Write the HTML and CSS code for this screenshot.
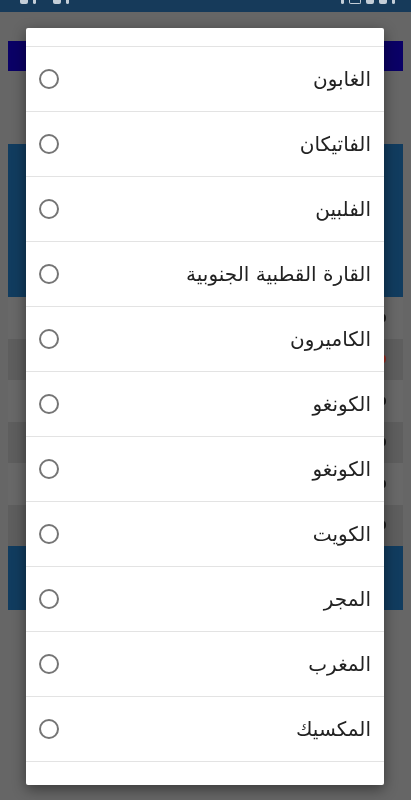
FILE: index.html
```html
<!DOCTYPE html>
<html lang="ar">
<head>
  <meta charset="UTF-8" />
  <meta name="viewport" content="width=device-width, initial-scale=1" />
  <title>اختر الدولة</title>
  <link rel="stylesheet" href="styles.css">
</head>
<body>

  <div class="statusbar">
    <div class="sb-group">
      <span class="sb-icon"></span>
      <span class="sb-icon thin"></span>
      <span class="sb-icon gap"></span>
      <span class="sb-icon thin"></span>
    </div>
    <div class="sb-group">
      <span class="sb-icon thin"></span>
      <span class="sb-icon round"></span>
      <span class="sb-icon"></span>
      <span class="sb-icon"></span>
      <span class="sb-icon thin"></span>
    </div>
  </div>

  <!-- page behind the dialog (already dimmed) -->
  <div class="page">
    <div class="topbar"></div>
    <div class="hero"></div>
    <div class="rows">
      <div class="row light"><span class="mark"></span></div>
      <div class="row dark"><span class="mark red"></span></div>
      <div class="row light"><span class="mark"></span></div>
      <div class="row dark"><span class="mark"></span></div>
      <div class="row light"><span class="mark"></span></div>
      <div class="row dark"><span class="mark"></span></div>
    </div>
    <div class="hero small"></div>
  </div>

  <div class="dialog">
    <ul class="choices" dir="rtl">
      <li class="choice"><span class="label">الغابون</span><span class="radio"></span></li>
      <li class="choice"><span class="label">الفاتيكان</span><span class="radio"></span></li>
      <li class="choice"><span class="label">الفلبين</span><span class="radio"></span></li>
      <li class="choice"><span class="label">القارة القطبية الجنوبية</span><span class="radio"></span></li>
      <li class="choice"><span class="label">الكاميرون</span><span class="radio"></span></li>
      <li class="choice"><span class="label">الكونغو</span><span class="radio"></span></li>
      <li class="choice"><span class="label">الكونغو</span><span class="radio"></span></li>
      <li class="choice"><span class="label">الكويت</span><span class="radio"></span></li>
      <li class="choice"><span class="label">المجر</span><span class="radio"></span></li>
      <li class="choice"><span class="label">المغرب</span><span class="radio"></span></li>
      <li class="choice"><span class="label">المكسيك</span><span class="radio"></span></li>
      <li class="choice"></li>
    </ul>
  </div>

</body>
</html>
```

FILE: styles.css
```css
html, body {
  margin: 0;
  padding: 0;
  height: 100%;
  overflow: hidden;
}
body {
  background: #666666;
  font-family: 'DejaVu Sans', 'Noto Sans', sans-serif;
}
.statusbar {
  height: 12px;
  background: #163a5a;
  display: flex;
  justify-content: space-between;
  align-items: flex-start;
  padding: 0 16px 0 20px;
  overflow: hidden;
}
.sb-group {
  display: flex;
  gap: 5px;
}
.sb-icon {
  width: 8px;
  height: 4px;
  background: #c4ced8;
  border-radius: 0 0 2px 2px;
}
.sb-icon.thin {
  width: 3px;
}
.sb-icon.gap {
  margin-left: 12px;
}
.sb-icon.round {
  width: 10px;
  height: 3px;
  background: none;
  border: 1px solid #c4ced8;
  border-top: none;
}
.page {
  padding: 29px 8px 0;
}
.topbar {
  height: 30px;
  background: #0a0066;
}
.hero {
  margin-top: 73px;
  height: 153px;
  background: #113c5f;
}
.hero.small {
  margin-top: 0;
  height: 64px;
}
.rows {
  display: flex;
  flex-direction: column;
}
.row {
  height: 41.5px;
  display: flex;
  justify-content: flex-end;
  align-items: center;
}
.row.light {
  background: #686868;
}
.row.dark {
  background: #5e5e5e;
}
.mark {
  width: 6px;
  height: 8px;
  margin-right: 17px;
  border-radius: 50%;
  background: #1b1b1b;
}
.mark.red {
  background: #9b2b1f;
}
.dialog {
  position: fixed;
  top: 28px;
  left: 26px;
  width: 358px;
  height: 757px;
  background: #ffffff;
  border-radius: 2px;
  box-shadow: 0 4px 14px rgba(0, 0, 0, 0.45);
  overflow: hidden;
}
.choices {
  list-style: none;
  margin: 0;
  padding: 18px 0 0;
}
.choice {
  height: 64px;
  border-top: 1px solid #e3e3e3;
  display: flex;
  align-items: center;
  padding: 0 13px;
}
.label {
  font-size: 20px;
  color: #222222;
}
.radio {
  margin-right: auto;
  width: 16px;
  height: 16px;
  border: 2px solid #757575;
  border-radius: 50%;
}
```
